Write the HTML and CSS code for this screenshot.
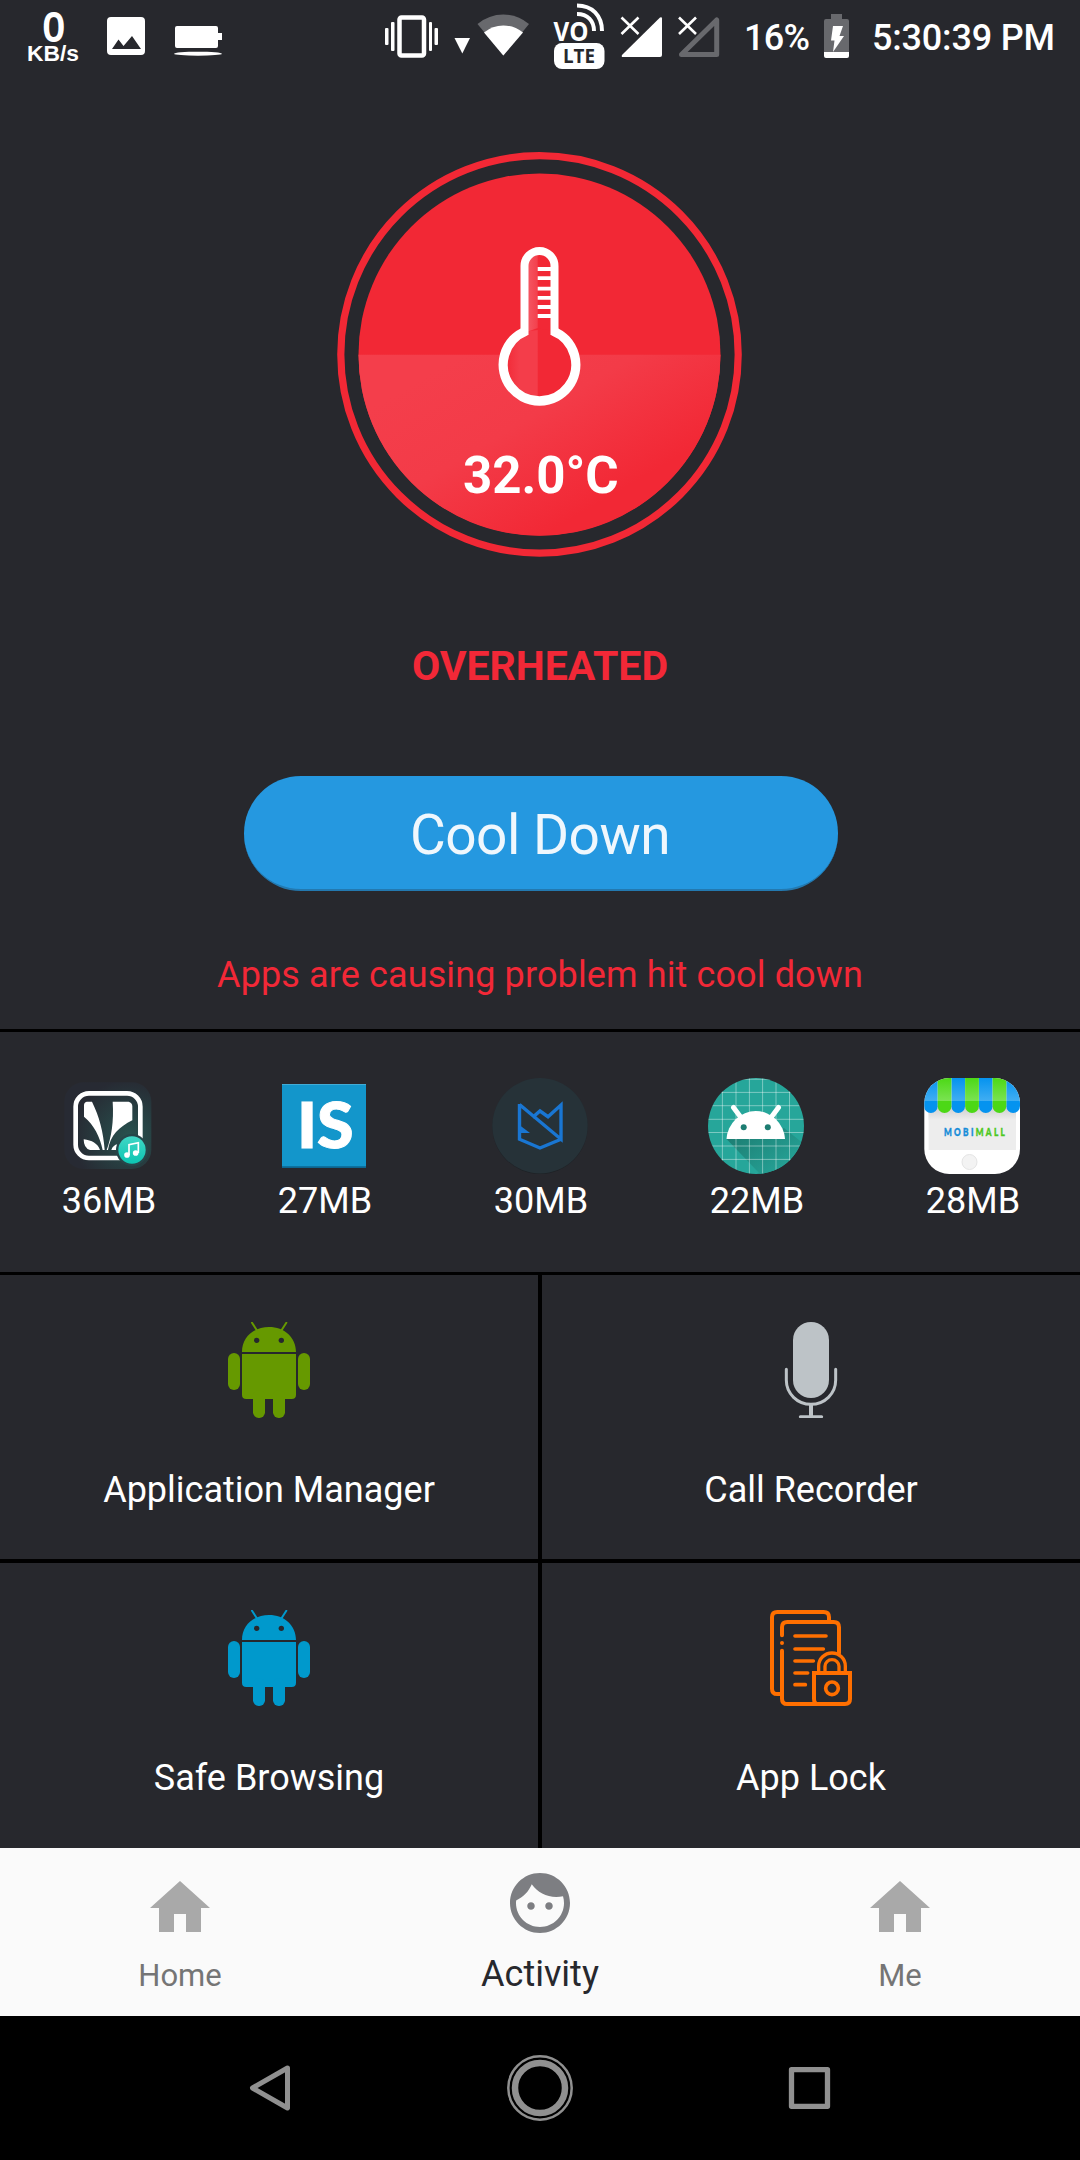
FILE: index.html
```
<!DOCTYPE html>
<html lang="en">
<head>
<meta charset="utf-8">
<title>Activity</title>
<link rel="stylesheet" href="styles.css">
</head>
<body>
<svg class="defs" width="0" height="0">
  <symbol id="droid" viewBox="423 186 288 288">
    <path d="M486 276c0-44 35-75 81-75s81 31 81 75zM486 282h162v122q0 13-13 13H499q-13 0-13-13z"/>
    <path d="M516 188l14 22M619 188l-14 22" fill="none" stroke="currentColor" stroke-width="6" stroke-linecap="round"/>
    <rect x="444" y="279" width="36" height="111" rx="18"/>
    <rect x="654" y="279" width="36" height="111" rx="18"/>
    <rect x="519" y="390" width="36" height="84" rx="17"/>
    <rect x="579" y="390" width="36" height="84" rx="17"/>
    <circle cx="530" cy="241" r="8" fill="#27282d"/><circle cx="604" cy="241" r="8" fill="#27282d"/>
  </symbol>
  <symbol id="home" viewBox="0 0 24 24"><path d="M10 20v-6h4v6h5v-8h3L12 3 2 12h3v8z"/></symbol>
</svg>
<div class="screen">
  <header class="status">
    <svg class="status-left" width="240" height="72" viewBox="0 0 240 72" fill="#fff">
      <text class="net" x="53.800" y="41" font-size="41" text-anchor="middle" textLength="21" lengthAdjust="spacingAndGlyphs">0</text>
      <text class="unit" x="27" y="61" font-size="22.500" textLength="52" lengthAdjust="spacingAndGlyphs">KB/s</text>
      <path d="M111 17h30q4 0 4 4v30q0 4-4 4h-30q-4 0-4-4V21q0-4 4-4zM112 49h29l-9-13-8.500 10-5-6.500z" fill-rule="evenodd"/>
      <path d="M177 26h39q2 0 2 2v5h4v7h-4v6q0 2-2 2h-39q-2 0-2-2V28q0-2 2-2z"/>
      <ellipse cx="198" cy="53.700" rx="24" ry="2"/>
    </svg>
    <svg class="status-right" width="700" height="72" viewBox="380 0 700 72" fill="#fff">
      <rect x="399.500" y="17.500" width="24.500" height="38" rx="2" fill="none" stroke="#fff" stroke-width="4.500"/>
      <rect x="385" y="28" width="3.500" height="17" rx="1"/><rect x="391" y="22" width="3.500" height="29" rx="1"/>
      <rect x="429" y="22" width="3" height="29" rx="1"/><rect x="434.500" y="28" width="3.500" height="17" rx="1"/>
      <path d="M454.500 38H470l-7.700 15.500z"/>
      <path d="M503.300 55.500L477.500 24q11.500-9.500 25.800-9.500T529 24z" fill="#68696d"/>
      <path d="M503.300 55.500L484 32.500q8.500-7 19.300-7t19.700 7z"/>
      <text class="volte" x="553.500" y="40.500" font-size="27.500" textLength="35" lengthAdjust="spacingAndGlyphs">VO</text>
      <path d="M577 5.500c15 0 25 10 25 25.500M577 14c10.500 0 17 6.500 17 17" fill="none" stroke="#fff" stroke-width="4"/>
      <rect x="554" y="43" width="50.500" height="26" rx="8"/>
      <text class="lte" x="563" y="63" font-size="19.500" textLength="32" lengthAdjust="spacingAndGlyphs">LTE</text>
      <path d="M623 57q-2 0-1-2l38-37.500q2-1 2 1V55q0 2-2 2z"/>
      <path d="M681.500 54.500L716.700 20v34.500z" fill="none" stroke="#68696d" stroke-width="5" stroke-linejoin="round"/>
      <g fill="none" stroke="#27282d" stroke-width="7"><path d="M622 17.500l17 17m0-17l-17 17M679 17.500l17 17m0-17l-17 17"/></g>
      <g fill="none" stroke="#fff" stroke-width="2.600"><path d="M621.500 17.500l17 16.500m0-16.500l-17 16.500M679 17.500l17 16.500m0-16.500l-17 16.500"/></g>
      <text class="clock" x="744" y="49.700" font-size="36" textLength="66">16%</text>
      <path d="M831 14h11v5h5q2 0 2 2v31h-25V21q0-2 2-2h5z" fill="#68696d"/>
      <path d="M824 52h25v4q0 2-2 2h-21q-2 0-2-2z"/>
      <path d="M833 26h10l-3.500 10h4.500L833 52l1.500-11.500H831z"/>
      <text class="clock" x="872" y="49.700" font-size="36" textLength="183">5:30:39 PM</text>
    </svg>
  </header>

  <section class="hero">
    <svg class="gauge" viewBox="337 151 406 406">
      <defs>
        <linearGradient id="glow" gradientUnits="userSpaceOnUse" x1="470" y1="350" x2="570" y2="520">
          <stop offset="0" stop-color="#f43e4b"/><stop offset=".45" stop-color="#f33b48"/><stop offset="1" stop-color="#f22835"/>
        </linearGradient>
        <linearGradient id="bulb"><stop offset="0" stop-color="#f22835"/><stop offset=".45" stop-color="#f43d4a"/><stop offset="1" stop-color="#f43d4a"/></linearGradient>
        <linearGradient id="tube"><stop offset="0" stop-color="#f5606b"/><stop offset="1" stop-color="#f33f4c"/></linearGradient>
      </defs>
      <circle cx="539.500" cy="354.400" r="198.700" fill="none" stroke="#f22835" stroke-width="7.200"/>
      <circle cx="539.500" cy="354.400" r="181" fill="#f22835"/>
      <path d="M358.500 354.700a181 181 0 0 0 362 0z" fill="url(#glow)"/>
      <circle cx="539.500" cy="364.700" r="36" fill="#f22835"/>
      <path d="M537.700 330q-14 0-23 10a34 34 0 0 0 0 49q9 8 23 8z" fill="url(#bulb)"/>
      <path d="M524 333v-67q1-11 13.700-14v76z" fill="url(#tube)"/>
      <path d="M524.500 335V266a14.900 14.900 0 0 1 30 0v69" fill="none" stroke="#fff" stroke-width="8"/>
      <path d="M526 331a36.300 36.300 0 1 0 27 0" fill="none" stroke="#fff" stroke-width="9.300"/>
      <path d="M537.700 269h15M537.700 278.200h15M537.700 288.700h15M537.700 297.800h15M537.700 307h15M537.700 316h15" stroke="#fff" stroke-width="3.800"/>
      <text class="temp" x="540.800" y="493" font-size="51" text-anchor="middle" fill="#fff">32.0°C</text>
    </svg>
    <h1 class="state">OVERHEATED</h1>
    <button class="cool">Cool Down</button>
    <p class="hint">Apps are causing problem hit cool down</p>
  </section>

  <section class="apps">
    <div class="app">
      <svg class="icon" viewBox="180 54 288 288">
        <defs>
          <radialGradient id="saavn" cx=".75" cy=".62" r=".65"><stop offset="0" stop-color="#28524f"/><stop offset="1" stop-color="#272a33"/></radialGradient>
          <linearGradient id="mint" x2="0" y2="1"><stop offset="0" stop-color="#40d6c5"/><stop offset="1" stop-color="#0dc5b2"/></linearGradient>
        </defs>
        <rect x="193" y="67" width="261" height="260" rx="58" fill="url(#saavn)"/>
        <rect x="227" y="100" width="194" height="194" rx="40" fill="none" stroke="#fff" stroke-width="14"/>
        <path fill="#fff" d="M260 125h16c22 45 34 90 38 145h-6c-8-40-26-75-56-100v-34q0-9 8-11zM338 125h48q11 3 11 14v42c-40 20-66 45-73 89h-4c14-38 22-85 18-145zM251 238c25 3 42 12 49 32h-30q-19-5-19-32zM334 270q4-14 20-18l-6 18z"/>
        <circle cx="396" cy="270" r="48" fill="#27464a"/><circle cx="396" cy="270" r="41" fill="url(#mint)"/>
        <path d="M387 285v-31l28-6v31" fill="none" stroke="#fff" stroke-width="5"/>
        <circle cx="381" cy="285" r="8.500" fill="#fff"/><circle cx="407" cy="279" r="8.500" fill="#fff"/>
      </svg>
      <span class="size">36MB</span>
    </div>
    <div class="app">
      <svg class="icon" viewBox="828 54 288 288">
        <path d="M846 74h252v250H846z" fill="#0c658f"/><path d="M846 72h252v247H846z" fill="#1396cb"/><path d="M846 72h252v3H846z" fill="#42abd5"/>
        <text class="is" x="891" y="265" font-size="190" textLength="170" lengthAdjust="spacingAndGlyphs" fill="#fff">IS</text>
      </svg>
      <span class="size">27MB</span>
    </div>
    <div class="app">
      <svg class="icon" viewBox="0 0 96 96">
        <circle cx="48" cy="48.500" r="47.500" fill="#1e2226"/><circle cx="48" cy="47.700" r="47.700" fill="#263238"/>
        <path d="M27.500 26.500L69 61.200V27L56 38.700 48 33l-7.500 6.500M27.500 26v35.200L48 70l21-8.800" fill="none" stroke="#1976d2" stroke-width="3.400"/>
        <path d="M26 46l12 9H26z" fill="#1976d2"/>
      </svg>
      <span class="size">30MB</span>
    </div>
    <div class="app">
      <svg class="icon" viewBox="0 0 96 96">
        <defs>
          <clipPath id="round"><circle cx="48" cy="48" r="48"/></clipPath>
          <linearGradient id="cast" x2="1" y2=".8"><stop offset=".1" stop-color="#1d7d72"/><stop offset="1" stop-color="#26a69a"/></linearGradient>
        </defs>
        <g clip-path="url(#round)">
          <path fill="#26a69a" d="M0 0h96v96H0z"/>
          <path d="M18.500 61L52 96h44V66L76 50z" fill="url(#cast)"/>
          <path d="M14.400 0v96M28 0v96M41.400 0v96M54.600 0v96M68 0v96M81.500 0v96M0 1.200h96M0 14.400h96M0 27.700h96M0 41.300h96M0 54.500h96M0 68h96M0 81.400h96" stroke="#fff" stroke-opacity=".4" stroke-width="1"/>
        </g>
        <path d="M18.500 61a29.300 29.700 0 0 1 58.500 0z" fill="#fff"/>
        <path d="M25.500 29.500l7.500 10M70.500 29.500L63 39.500" stroke="#fff" stroke-width="5" stroke-linecap="round"/>
        <circle cx="35.700" cy="49.300" r="3" fill="#1d7d72"/><circle cx="59.800" cy="49.300" r="3" fill="#1d7d72"/>
      </svg>
      <span class="size">22MB</span>
    </div>
    <div class="app">
      <svg class="icon" viewBox="0 0 96 96">
        <defs>
          <clipPath id="phone"><rect x=".3" width="95.700" height="96" rx="25"/></clipPath>
          <linearGradient id="blue" x2="0" y2="1"><stop offset="0" stop-color="#0593ef"/><stop offset="1" stop-color="#41aef2"/></linearGradient>
          <linearGradient id="green" x2="0" y2="1"><stop offset="0" stop-color="#4cd816"/><stop offset="1" stop-color="#7be352"/></linearGradient>
          <linearGradient id="awning" x2="0" y2="1"><stop offset="0" stop-color="#ccc"/><stop offset="1" stop-color="#ededed"/></linearGradient>
        </defs>
        <g clip-path="url(#phone)">
          <path fill="#fff" d="M0 0h96v96H0z"/>
          <path fill="#ededed" d="M4.600 28H92v44H4.600z"/><path fill="url(#awning)" d="M4.600 28H92v14H4.600z"/>
          <path fill="#0593ef" d="M0 23h13.700v5a6.850 7 0 0 1-13.700 0zM27.400 23h13.700v5a6.850 7 0 0 1-13.700 0zM54.900 23h13.700v5a6.850 7 0 0 1-13.700 0zM82.300 23H96v5a6.850 7 0 0 1-13.700 0z"/>
          <path fill="#4cd816" d="M13.700 23h13.700v5a6.850 7 0 0 1-13.700 0zM41.100 23h13.800v5a6.850 7 0 0 1-13.800 0zM68.600 23h13.700v5a6.850 7 0 0 1-13.700 0z"/>
          <path fill="url(#blue)" d="M0 0h13.700v23H0zM27.400 0h13.700v23H27.400zM54.900 0h13.700v23H54.900zM82.300 0H96v23H82.300z"/>
          <path fill="url(#green)" d="M13.700 0h13.700v23H13.700zM41.100 0h13.800v23H41.100zM68.600 0h13.700v23H68.600z"/>
        </g>
        <circle cx="45.500" cy="84" r="7.500" fill="#f3f3f3" stroke="#e4e4e4"/>
        <text class="mall" transform="translate(20 57.700) scale(.78 1)" font-size="10.500" textLength="78" fill="#168cd8" stroke="#168cd8">MOBI<tspan fill="#4cc81e" stroke="#4cc81e">MALL</tspan></text>
      </svg>
      <span class="size">28MB</span>
    </div>
  </section>

  <section class="tools">
    <div class="tool"><svg class="icon green"><use href="#droid"/></svg><span>Application Manager</span></div>
    <div class="tool">
      <svg class="icon" viewBox="249 96 288 288" fill="#bdc3c7">
        <rect x="339" y="96" width="108" height="228" rx="54"/>
        <path d="M319 238v33a74 72 0 0 0 148 0v-33M361 380h64" fill="none" stroke="#bdc3c7" stroke-width="9" stroke-linecap="round"/>
        <path d="M387 343h12v36h-12z"/>
      </svg><span>Call Recorder</span>
    </div>
    <div class="tool"><svg class="icon sky"><use href="#droid"/></svg><span>Safe Browsing</span></div>
    <div class="tool">
      <svg class="icon" viewBox="249 90 288 288" fill="none" stroke="#ff6f00" stroke-width="12" stroke-linecap="round">
        <path d="M301 342h-9q-16 0-16-16V112q0-16 16-16h139q16 0 16 16v10"/>
        <path d="M306 166v-24q0-16 16-16h139q16 0 16 16v78M306 212v144q0 16 16 16h173q15 0 15-15v-78H402v77q0 16 12 16M306 189v.100" stroke-linecap="round"/>
        <path d="M345 168h93M345 207h85M345 243h55M345 279h38M345 314h31" stroke-width="11"/>
        <path d="M416 273v-15a40 39 0 0 1 80 0v15M435 273v-14a21 20 0 0 1 42 0v14" stroke-width="10"/>
        <circle cx="456" cy="325" r="19" stroke-width="11"/>
      </svg><span>App Lock</span>
    </div>
  </section>

  <nav class="tabs">
    <a class="tab"><svg class="tab-icon"><use href="#home"/></svg><span>Home</span></a>
    <a class="tab active"><svg class="tab-icon" viewBox="0 0 24 24"><path d="M9 11.750c-.69 0-1.250.56-1.250 1.250s.56 1.250 1.250 1.250 1.250-.56 1.250-1.250-.56-1.250-1.250-1.250zm6 0c-.69 0-1.250.56-1.250 1.250s.56 1.250 1.250 1.250 1.250-.56 1.250-1.250-.56-1.250-1.250-1.250zM12 2C6.480 2 2 6.480 2 12s4.480 10 10 10 10-4.480 10-10S17.520 2 12 2zm0 18c-4.410 0-8-3.590-8-8 0-.290.020-.580.050-.860 2.360-1.050 4.230-2.980 5.210-5.370C11.070 8.330 14.050 10 17.420 10c.780 0 1.530-.090 2.250-.260.210.710.330 1.470.330 2.260 0 4.410-3.590 8-8 8z"/></svg><span>Activity</span></a>
    <a class="tab"><svg class="tab-icon"><use href="#home"/></svg><span>Me</span></a>
  </nav>

  <footer class="sysnav">
    <svg width="72" height="72" fill="none" stroke="#909090" stroke-width="5" stroke-linejoin="round"><path d="M53.500 16L18.500 36l35 20z"/></svg>
    <svg width="72" height="72" fill="none" stroke="#909090"><circle cx="36" cy="36" r="31.700" stroke-width="2.500"/><circle cx="36" cy="36" r="25" stroke-width="6.500"/></svg>
    <svg width="72" height="72" fill="none" stroke="#909090" stroke-width="5.300" stroke-linejoin="round"><path d="M17.500 17.700h36v36.600h-36z"/></svg>
  </footer>
</div>
</body>
</html>
```
FILE: styles.css
```
* { box-sizing: border-box; }
body { margin: 0; font-family: Roboto, sans-serif; background: #27282d; }
.defs { position: absolute; }
svg { display: block; }
.screen { width: 1080px; height: 2160px; display: flex; flex-direction: column; background: #27282d; color: #fff; }

.status { height: 72px; display: flex; justify-content: space-between; }
.net { font-family: "Liberation Sans", sans-serif; font-weight: 400; stroke: #fff; stroke-width: 2px; }
.unit { font-family: "Liberation Sans", sans-serif; font-weight: 700; }
.volte { font-family: "Open Sans", sans-serif; font-weight: 700; }
.lte { font-family: "Open Sans", sans-serif; font-weight: 700; fill: #27282d; }
.clock { font-weight: 500; }

.hero { height: 957px; padding-top: 79px; display: flex; flex-direction: column; align-items: center; }
.gauge { width: 406px; height: 406px; }
.temp { font-weight: 700; }
.state { margin: 85px 0 0; font-size: 41px; line-height: 48px; font-weight: 700; color: #f22837; }
.cool { width: 594px; height: 115px; margin: 86px 0 0 2px; padding: 4px 2px 0 0; border: 0; border-bottom: 2px solid #2379b0; border-radius: 57px; background: #2598e0; color: #eff7fd; font: 400 55px/64px Roboto, sans-serif; letter-spacing: -0.5px; }
.hint { margin: 63px 0 0; font-size: 36px; line-height: 42px; letter-spacing: 0.12px; color: #f22837; }

.apps { height: 246px; padding-top: 46px; display: grid; grid-template-columns: repeat(5, 1fr); border-top: 3px solid #000; border-bottom: 3px solid #000; }
.app { display: flex; flex-direction: column; align-items: center; gap: 6px; }
.icon { width: 96px; height: 96px; }
.size { padding-left: 2px; font-size: 36px; line-height: 42px; }
.is { font-family: Lato, sans-serif; font-weight: 900; stroke: #fff; stroke-width: 3px; }
.mall { font-family: Lato, sans-serif; font-weight: 900; stroke-width: 0.4px; }

.tools { height: 573px; display: grid; grid-template-columns: 538px 538px; grid-template-rows: 284px 285px; gap: 4px; background: #000; }
.tool { padding-top: 47px; display: flex; flex-direction: column; align-items: center; gap: 51px; background: #27282d; font-size: 36px; line-height: 42px; }
.green { color: #669900; fill: #669900; }
.sky { color: #0099cc; fill: #0099cc; }

.tabs { height: 168px; display: grid; grid-template-columns: repeat(3, 1fr); background: #fafafa; }
.tab { padding-top: 24px; display: flex; flex-direction: column; align-items: center; gap: 13px; font-size: 31px; line-height: 37px; color: #757575; fill: #a9a9a9; }
.tab.active { padding-top: 19px; gap: 14px; font-size: 36px; line-height: 42px; color: #27282d; fill: #7d7e82; }
.tab-icon { width: 72px; height: 72px; }

.sysnav { height: 144px; padding: 0 135px; display: grid; grid-template-columns: repeat(3, 1fr); align-items: center; justify-items: center; background: #000; }
```
